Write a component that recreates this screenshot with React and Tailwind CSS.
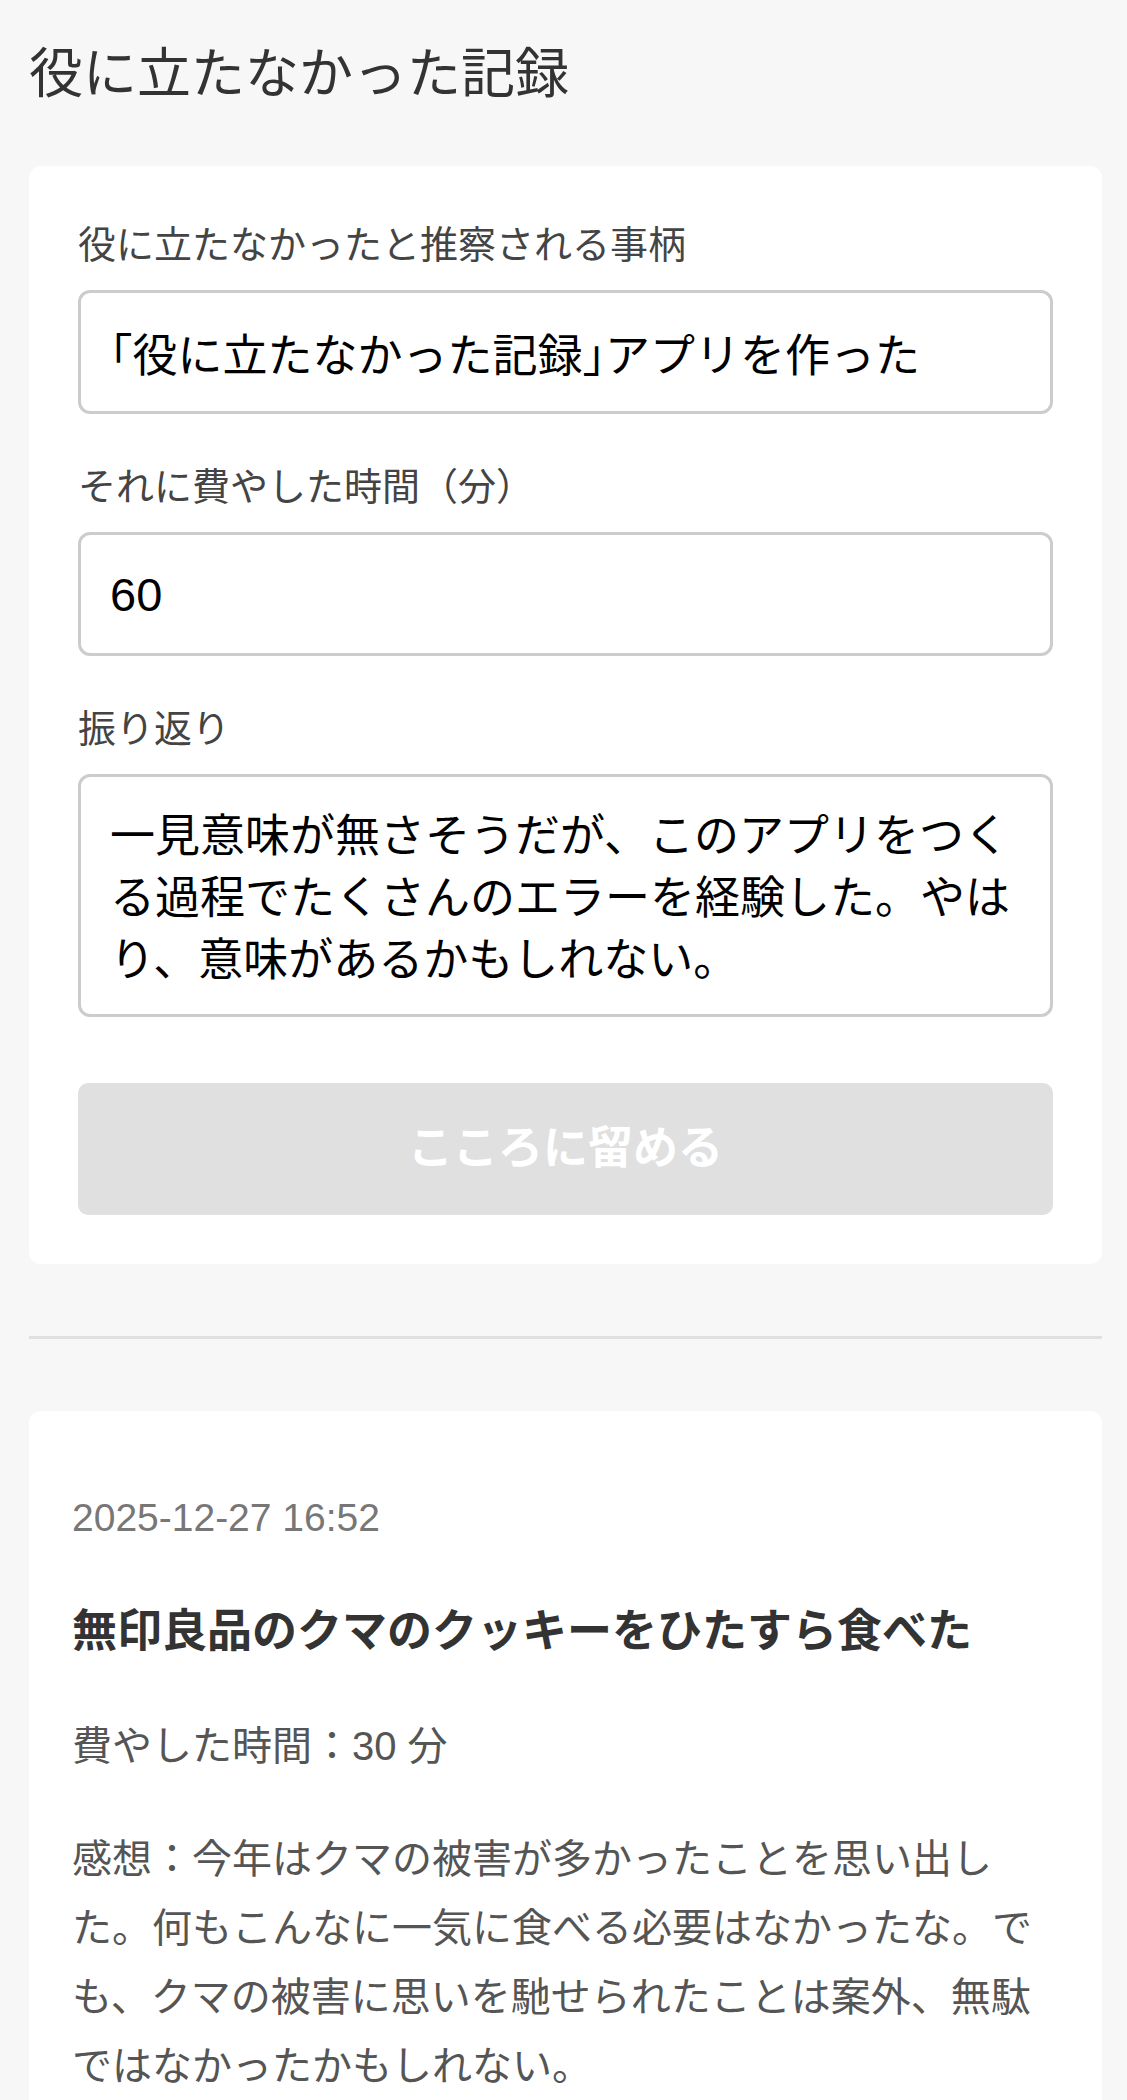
import React from 'react'

const font = "font-['Liberation_Sans','Noto_Sans_CJK_JP',sans-serif]"

function Field({ label, children }) {
  return (
    <div>
      <label className="block text-[38px] leading-[38px] text-[#444]">{label}</label>
      <div className="mt-[26px]">{children}</div>
    </div>
  )
}

function RecordCard({ date, title, minutes, note }) {
  return (
    <div className="mt-[72px] rounded-[12px] bg-white pl-[43px] pr-[43px] pt-[78px] pb-[60px]">
      <p className="text-[39px] leading-[58px] text-[#777]">{date}</p>
      <h2 className="mt-[53px] text-[45px] font-bold leading-[63px] text-[#333]">{title}</h2>
      <p className="mt-[49px] text-[40px] leading-[69px] text-[#555]">費やした時間：{minutes} 分</p>
      <p className="mt-[44px] text-[40px] leading-[69px] text-[#555]">感想：{note}</p>
    </div>
  )
}

export default function App() {
  return (
    <div className={`min-h-screen bg-[#f7f7f7] pl-[29px] pr-[25px] pt-[47px] ${font}`}>
      <h1 className="text-[54px] font-normal leading-[54px] text-[#333]">役に立たなかった記録</h1>

      <div className="mt-[65px] rounded-[12px] bg-white px-[49px] pt-[60px] pb-[49px]">
        <div className="flex flex-col gap-[54px]">
          <Field label="役に立たなかったと推察される事柄">
            <input
              readOnly
              value="「役に立たなかった記録」アプリを作った"
              className={`h-[124px] w-full rounded-[12px] border-[3px] border-[#cccccc] bg-white px-[29px] text-[45px] text-black outline-none [font-feature-settings:'halt'] ${font}`}
            />
          </Field>
          <Field label="それに費やした時間（分）">
            <input
              readOnly
              value="60"
              className={`h-[124px] w-full rounded-[12px] border-[3px] border-[#cccccc] bg-white px-[29px] text-[47px] text-black outline-none ${font}`}
            />
          </Field>
          <Field label="振り返り">
            <textarea
              readOnly
              value="一見意味が無さそうだが、このアプリをつくる過程でたくさんのエラーを経験した。やはり、意味があるかもしれない。"
              className={`block h-[243px] w-full resize-none overflow-hidden rounded-[12px] border-[3px] border-[#cccccc] bg-white px-[29px] pt-[29px] text-[45px] leading-[62px] text-black outline-none ${font}`}
            />
          </Field>
        </div>

        <button
          disabled
          className={`mt-[66px] flex h-[132px] w-full items-center justify-center rounded-[10px] bg-[#e0e0e0] text-[45px] font-bold text-white ${font}`}
        >
          こころに留める
        </button>
      </div>

      <hr className="mt-[72px] border-0 border-t-[3px] border-[#e0e0e0]" />

      <RecordCard
        date="2025-12-27 16:52"
        title="無印良品のクマのクッキーをひたすら食べた"
        minutes={30}
        note="今年はクマの被害が多かったことを思い出した。何もこんなに一気に食べる必要はなかったな。でも、クマの被害に思いを馳せられたことは案外、無駄ではなかったかもしれない。"
      />
    </div>
  )
}
